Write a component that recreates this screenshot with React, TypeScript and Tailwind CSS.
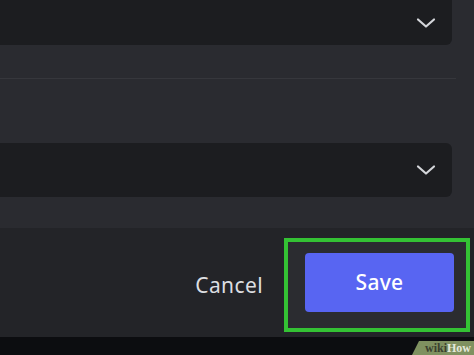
import React from "react";

function Chevron() {
  return (
    <svg width="22" height="12" viewBox="0 0 22 12" fill="none">
      <path d="M3 2.5 L11 9.5 L19 2.5" stroke="#d4d6da" strokeWidth="2.2" strokeLinecap="round" strokeLinejoin="round" />
    </svg>
  );
}

export default function App() {
  return (
    <div className="relative w-[474px] h-[355px] overflow-hidden bg-[#2a2b30]" style={{ fontFamily: '"Noto Sans", "Open Sans", sans-serif' }}>
      <div className="flex flex-col h-[228px]">
        <div className="w-[452px] h-[45px] bg-[#1c1d20] rounded-br-[6px] flex items-center justify-end pr-[15px] pt-[1px]">
          <Chevron />
        </div>
        <div className="mt-[33px] w-[456px] h-[1px] bg-[#36373c]" />
        <div className="mt-[64px] w-[452px] h-[54px] bg-[#1c1d20] rounded-r-[6px] flex items-center justify-end pr-[15px]">
          <Chevron />
        </div>
      </div>
      <div className="h-[109px] bg-[#232428] flex justify-end items-start pt-[10px] pr-[4px]">
        <div className="flex items-center mr-[21px] h-[94px]">
          <span className="text-[21px] font-normal text-[#dcdee1] leading-none tracking-[0.4px]">Cancel</span>
        </div>
        <div className="w-[186px] h-[94px] border-[4px] border-[#34c234] bg-[#2b2c30] pl-[17px] pt-[11px]">
          <div className="w-[149px] h-[59px] bg-[#5865f2] rounded-[4px] flex items-center justify-center">
            <span className="text-[21px] font-medium text-white leading-none tracking-[0.3px]">Save</span>
          </div>
        </div>
      </div>
      <div className="h-[18px] bg-[#0c0d10]" />
      <div
        className="absolute right-0 bottom-0 w-[62px] h-[14px] bg-[#7f9160] flex items-center justify-end pr-[3px]"
        style={{ clipPath: "polygon(7px 0, 100% 0, 100% 100%, 0 100%)" }}
      >
        <span className="text-[12px] font-bold leading-none" style={{ fontFamily: '"Liberation Serif", serif' }}>
          <span className="text-[#3a402e]">wiki</span>
          <span className="text-[#e4e8da]">How</span>
        </span>
      </div>
    </div>
  );
}
